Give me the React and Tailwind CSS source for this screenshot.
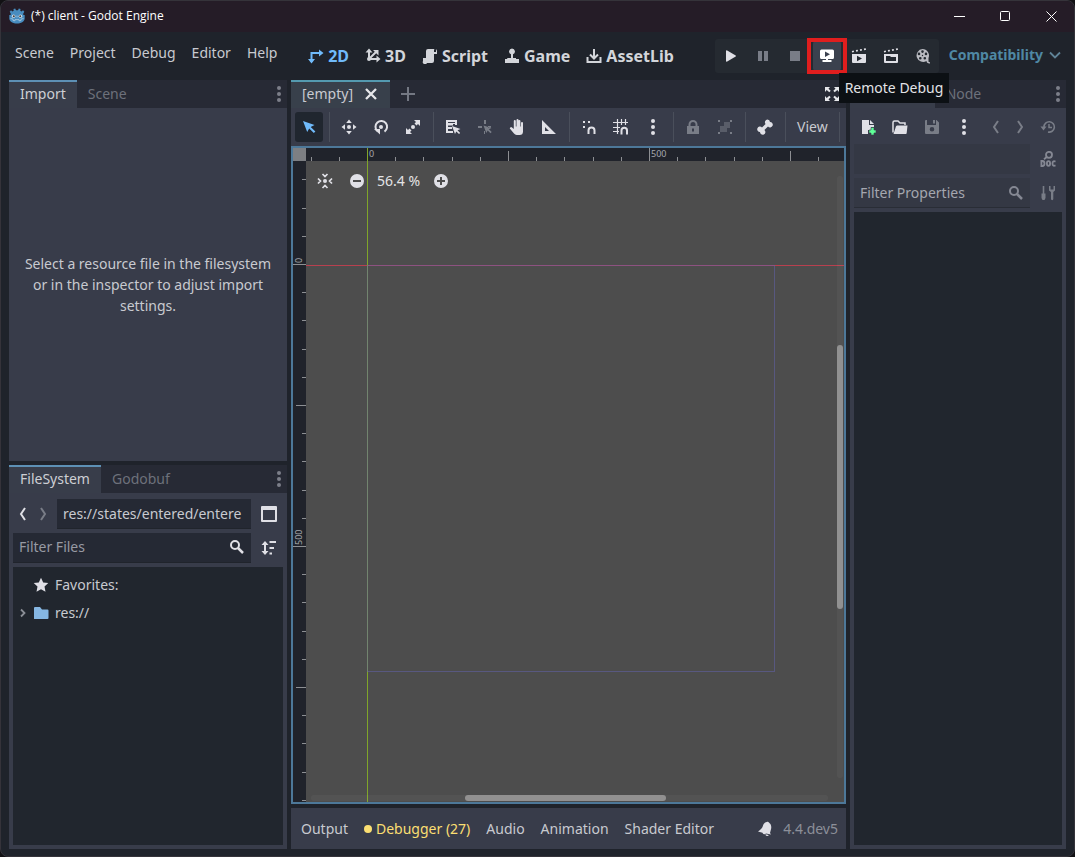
import React from 'react';

// --- Icons (16x16 grid) ---
const Icon = ({ children, size = 16, className = '' }) => (
    <svg width={size} height={size} viewBox="0 0 16 16" fill="currentColor" className={`shrink-0 ${className}`} aria-hidden="true">
        {children}
    </svg>
);

const line = { fill: 'none', stroke: 'currentColor', strokeWidth: 2 };
const clapper = 'M.8 2.900l1.900-.4.4 1.600-1.900.4zM4.800 2.100l1.900-.4.4 1.600-1.900.4zM8.800 1.300l1.900-.4.4 1.600-1.900.4zM12.800.6l1.900-.4.4 1.600-1.900.4z';

const icons = {
    mode2d: <><path d="M3.500 14V5h9" {...line} /><path d="M11 1.500 15.500 5 11 8.500zM0 11h7l-3.500 4.500z" /></>,
    mode3d: <><path d="M4 3v8h8M4 11l7-7" {...line} /><path d="M.5 4.500 4 .5l3.500 4zM11.500 7.500l4 3.500-4 3.500zM8 2h5.500v5.500z" /><circle cx="4" cy="11" r="2" /></>,
    script: <path d="M6 1a2 2 0 0 0-2 2v7H1v3a2 2 0 0 0 4 2h5a2 2 0 0 0 2-2V6h3V3a2 2 0 0 0-2-2zm6 1a1 1 0 0 1 2 0v2h-2z" />,
    game: <path d="M8 .5a3 3 0 0 0-1 5.800V10H4a1 1 0 0 0-1 1H1v4h14v-4h-3v-1H9V6.300A3 3 0 0 0 8 .5z" />,
    assetLib: <path d="M8 1v8M1.500 9v5h13V9M4 6.500l4 4 4-4" {...line} />,
    play: <path d="M3 3v10a.8.8 0 0 0 1.200.600l8.500-5a.8.8 0 0 0 0-1.200l-8.500-5A.8.8 0 0 0 3 3z" />,
    pause: <path d="M3 3h4v10H3zM9 3h4v10H9z" />,
    stop: <path d="M3 3h10v10H3z" />,
    remote: <path fillRule="evenodd" d="M2.500 1.500h11A1.500 1.500 0 0 1 15 3v6.500a1.500 1.500 0 0 1-1.500 1.500H9v1h3.500v2h-9v-2H7v-1H2.500A1.500 1.500 0 0 1 1 9.500V3a1.500 1.500 0 0 1 1.500-1.500zM6 3.500v5.500l5-2.750z" />,
    playScene: <path fillRule="evenodd" d={`M1 6h14v8a1 1 0 0 1-1 1H2a1 1 0 0 1-1-1zm5 1.700v5.500l5-2.750z${clapper}`} />,
    playCustom: <path fillRule="evenodd" d={`M1 6h14v8a1 1 0 0 1-1 1H2a1 1 0 0 1-1-1zm2 2v5h10V9H8L7 8z${clapper}`} />,
    movie: (
        <path
            fillRule="evenodd"
            d="M7.500 1a6.500 6.500 0 0 1 6 9V13a1 1 0 0 0 1.500 1v1.500c-2 .3-3.500-.8-3.500-2.500A6.500 6.500 0 1 1 7.500 1zm0 1.300a1.300 1.300 0 1 0 0 2.600 1.300 1.300 0 0 0 0-2.600zM4 4.600a1.300 1.300 0 1 0 0 2.600 1.300 1.300 0 0 0 0-2.600zm7 0a1.300 1.300 0 1 0 0 2.600 1.300 1.300 0 0 0 0-2.600zM5.300 9a1.300 1.300 0 1 0 0 2.600A1.300 1.300 0 0 0 5.300 9zm4.500 0a1.300 1.300 0 1 0 0 2.600 1.300 1.300 0 0 0 0-2.600zM7.500 6.800a.7.7 0 1 0 0 1.400.7.7 0 0 0 0-1.400z"
        />
    ),
    select: <path d="M2 2l4.200 11 2-3.600 4.600 4.600 1.600-1.600-4.700-4.500 3.800-1.800z" />,
    move: <path d="M8 .5 5.200 4h5.600zM8 15.500 5.200 12h5.600zM.5 8 4 5.200v5.600zM15.500 8 12 5.200v5.600zM8 6a2 2 0 1 0 0 4 2 2 0 0 0 0-4z" />,
    rotate: <><path d="M4.300 12A5.800 5.800 0 1 1 11.500 12.600" {...line} /><path d="M1 10h6v5.500z" /><circle cx="8" cy="8" r="2" /></>,
    scale: <><path d="M9 1h6v6l-2-2-1.500 1.500-2-2L11 3zM7 15H1V9l2 2 1.500-1.500 2 2L5 13z" /><circle cx="8" cy="8" r="2" /></>,
    listSelect: <><path d="M1 1h11v5h-2V3H3v2h5v1.500H3V8h4v2H3v2h5v2H1z" /><path d="M3 4.500h7M3 8.500h4" stroke="currentColor" /><path d="M7 7l3 8 1.300-2.600 2.700 2.700 1.200-1.200-2.700-2.700L15.500 10z" /></>,
    pivot: <path d="M7 1h2v4H7zM1 7h4v2H1zM7 12h1v3H7zM11 7h3v1.500h-3zM6.500 6.500l2.800 7.500 1.400-2.600 2.800 2.800 1.200-1.200-2.800-2.800 2.600-1.300z" />,
    hand: <path d="M8.500 0a1 1 0 0 0-1 1v6.500h-.7V2a1 1 0 0 0-2 0v8L3 8.500a1.200 1.200 0 0 0-1.800 1.600L5 14.500A3.500 3.500 0 0 0 8 16h2.500a3.500 3.500 0 0 0 3.500-3.500V4a1 1 0 0 0-2 0v3.500h-.6V2a1 1 0 0 0-2 0v5.500H9.500V1a1 1 0 0 0-1-1z" />,
    ruler: <path fillRule="evenodd" d="M1 1v14h14zm3 7 4 4H4z" />,
    smartSnap: <><path d="M2 2h2v2H2zM7 2h2v2H7zM2 7h2v2H2z" /><path d="M7.500 15v-3.500a3 3 0 0 1 6 0V15" {...line} /></>,
    gridSnap: <><path d="M4.500 0v15M0 3.500h15M0 8.500h7M8.500 0v6M12.500 0v6M0 12.500h6" fill="none" stroke="currentColor" strokeWidth="1.200" /><path d="M8.500 15.500v-4a2.700 2.700 0 0 1 5.500 0v4" {...line} /></>,
    dots: <><circle cx="8" cy="2" r="2" /><circle cx="8" cy="8" r="2" /><circle cx="8" cy="14" r="2" /></>,
    lock: <path fillRule="evenodd" d="M8 1a4.500 4.500 0 0 0-4.500 4.500V7H2v8h12V7h-1.500V5.500A4.500 4.500 0 0 0 8 1zm0 2a2.500 2.500 0 0 1 2.500 2.500V7h-5V5.500A2.500 2.500 0 0 1 8 3zM7 9.500h2v3H7z" />,
    group: <><path d="M1 1h2v2H1zM13 1h2v2h-2zM1 13h2v2H1zM13 13h2v2h-2z" /><path d="M7 3h6v6h-3v4H3V7h4z" opacity=".5" /></>,
    bone: <path d="M10.500.5A2.700 2.700 0 0 0 8.600 5L5 8.600a2.700 2.700 0 1 0-2 4.400 2.700 2.700 0 1 0 4.400-2L11 7.400a2.700 2.700 0 1 0 2-4.400A2.700 2.700 0 0 0 10.500.5z" />,
    file: <><path d="M2 1v14h6v-4h3V8h3V6H9V1zM10 1v4h4z" /><path d="M11 8.500h3V11h2v3h-2v2h-3v-2H9v-3h2z" fill="#5fff97" stroke="#373c49" strokeWidth=".6" /></>,
    folderOpen: <><path d="M1 13.500V3.500A1.500 1.500 0 0 1 2.500 2H6l2 2h5v2" fill="none" stroke="currentColor" strokeWidth="1.500" /><path d="M5 6.500h10.500l-.8 7.500a1 1 0 0 1-1 1H1.500L4 7.300z" /></>,
    save: <path fillRule="evenodd" d="M1 2a1 1 0 0 1 1-1h1v5h9V1h.5L15 3.500V14a1 1 0 0 1-1 1H2a1 1 0 0 1-1-1zm8-1h2v3.500H9zM8 8a2.300 2.300 0 1 0 0 4.600A2.300 2.300 0 0 0 8 8z" />,
    back: <path d="M10 2 6 8l4 6" {...line} />,
    forward: <path d="M6 2l4 6-4 6" {...line} />,
    history: <><path d="M4 8a5.200 5.200 0 1 1 4 5" {...line} strokeWidth="1.600" /><path d="M.5 7.500h6l-3 4z" /><path d="M9 5v3.500h3" fill="none" stroke="currentColor" strokeWidth="1.500" /></>,
    search: <><circle cx="6" cy="6" r="4" {...line} /><path d="M9 9l5 5" {...line} strokeWidth="2.500" /></>,
    tools: <><path d="M3.500 1v8" {...line} strokeWidth="1.600" /><path d="M1.500 8.500h4V13l-1 2h-2l-1-2zM9 1v4.500l2 1.500v7a1 1 0 0 0 2.300 0V7L15 5.500V1h-1.500v3.500h-3V1z" /></>,
    close: <path d="M3 3l10 10M13 3 3 13" {...line} strokeWidth="2.300" />,
    add: <path d="M8 1v14M1 8h14" {...line} />,
    expand: <path d="M1 1h5L4.500 2.700l2.200 2.100-1.400 1.500-2.600-2.200L1 6zM15 1h-5l1.500 1.700-2.200 2.100 1.400 1.500 2.600-2.200L15 6zM1 15h5l-1.500-1.700 2.200-2.100-1.400-1.500-2.600 2.200L1 10zM15 15h-5l1.500-1.700-2.200-2.100 1.400-1.500 2.600 2.200L15 10z" />,
    center: <><path d="M8 6a2 2 0 1 0 0 4 2 2 0 0 0 0-4z" /><path d="M5.500 1 8 3.500 10.500 1M5.500 15 8 12.500l2.500 2.500M1 5.500 3.500 8 1 10.500M15 5.500 12.500 8l2.500 2.500" fill="none" stroke="currentColor" strokeWidth="1.700" /></>,
    minus: <path fillRule="evenodd" d="M8 1a7 7 0 1 0 0 14A7 7 0 0 0 8 1zM4 7h8v2H4z" />,
    plus: <path fillRule="evenodd" d="M8 1a7 7 0 1 0 0 14A7 7 0 0 0 8 1zM7 4h2v3h3v2H9v3H7V9H4V7h3z" />,
    panel: <path fillRule="evenodd" d="M1 0h14a1 1 0 0 1 1 1v14a1 1 0 0 1-1 1H1a1 1 0 0 1-1-1V1a1 1 0 0 1 1-1zm1 4v10h12V4z" />,
    sort: <><path d="M4 3v10" {...line} /><path d="M.5 5 4 1l3.500 4zM.5 11 4 15l3.500-4zM8.500 1H15v2H8.500zM8.500 7H13v2H8.500zM8.500 12.500H11v2H8.500z" /></>,
    star: <path d="M8 .8l2.200 4.700 5.100.6-3.800 3.500 1 5.100L8 12.200l-4.500 2.500 1-5.100L.7 6.100l5.100-.6z" />,
    folder: <path d="M1 3a1 1 0 0 1 1-1h5l2 2.500h5.500a1 1 0 0 1 1 1V13a1 1 0 0 1-1 1H1.500a.5.5 0 0 1-.5-.5z" />,
    chevron: <path d="M6 4.500 9.500 8 6 11.500" {...line} strokeWidth="1.800" />,
    chevronDown: <path d="M3 5.500l5 5 5-5" {...line} strokeWidth="1.800" />,
    bell: <path d="M9 1.300C10 0 12 .8 12.300 2c2 1.500 2.300 3.800 1.700 6.300L13 12l1 1.600-5-1a2 2 0 0 1-3.500-.8L1 10.500l2-1.500c2-1.500 2.500-3 3.200-5C6.800 2.500 7.800 1.600 9 1.300zM8.500 13.200l3.300.7a1.700 1.700 0 0 1-3.300-.7z" />,
};

const IconButton = ({ icon, label, active, dim, className = 'w-7' }) => (
    <button
        type="button"
        aria-label={label}
        className={`flex h-[30px] shrink-0 items-center justify-center rounded-[3px] ${active ? 'bg-[#20262f] text-[#70bafa]' : dim ? 'text-[#797d87]' : 'text-[#e0e0e6]'} ${className}`}
    >
        <Icon>{icons[icon]}</Icon>
    </button>
);

const Separator = () => (
    <div className="flex h-[30px] w-1 shrink-0 justify-center"><div className="w-px bg-[#4a4f5b]" /></div>
);

const TabBar = ({ tabs, covered, children }) => (
    <div className="flex h-7 shrink-0 items-center bg-[#272a35]">
        {tabs.map((tab, i) => (
            <button
                key={tab}
                type="button"
                aria-label={tab}
                className={`h-full border-t-2 px-[11px] pb-0.5 ${i === 0 ? 'border-[#5d90b5] bg-[#383d4a] text-[#cdcfd4]' : 'border-transparent text-[#6d717b]'}`}
            >
                <span className={tab === covered ? 'invisible' : ''}>{tab}</span>
            </button>
        ))}
        {children}
    </div>
);

const DockMenu = () => (
    <button type="button" aria-label="Dock options" className="ml-auto flex h-full w-4 items-center justify-center text-[#7c7f89]">
        <Icon>{icons.dots}</Icon>
    </button>
);

const TitleBar = () => (
    <header className="flex h-8 shrink-0 items-center bg-[#251c27] pl-2 font-['Open_Sans',sans-serif] text-xs text-white">
        <svg width="16" height="16" viewBox="0 0 16 16" className="mr-1.5" aria-hidden="true">
            <path fill="#478cbf" d="M6.200.5 4.500 1l.2 1.700-1.200.7L2 2.300.7 3.800l1 1.600V7H.3v3.500c0 3 4 5 7.700 5s7.700-2 7.700-5V7h-1.400V5.400l1-1.600L14 2.300l-1.500 1.100-1.200-.7.200-1.700L9.800.5 9 2.200H7z" />
            <circle cx="4.600" cy="8.200" r="1.800" fill="#cfdde8" />
            <circle cx="11.400" cy="8.200" r="1.800" fill="#cfdde8" />
            <circle cx="4.800" cy="8.300" r="1" fill="#414042" />
            <circle cx="11.200" cy="8.300" r="1" fill="#414042" />
            <path fill="none" stroke="#b9d2e4" strokeWidth=".7" d="M1.500 10.500l2.500.5v1.500l2 .3v-1.200h4v1.200l2-.3V11l2.500-.5M8 7.500v2" />
        </svg>
        <span>(*) client - Godot Engine</span>
        <div className="ml-auto flex h-full">
            <button type="button" aria-label="Minimize" className="flex w-[46px] items-center justify-center">
                <svg width="11" height="11"><path d="M0 5.500h11" stroke="#fff" /></svg>
            </button>
            <button type="button" aria-label="Maximize" className="flex w-[46px] items-center justify-center">
                <svg width="11" height="11"><rect x=".5" y=".5" width="9" height="9" rx="1" fill="none" stroke="#fff" /></svg>
            </button>
            <button type="button" aria-label="Close" className="flex w-[46px] items-center justify-center">
                <svg width="11" height="11"><path d="M.5.5l10 10M10.500.5l-10 10" stroke="#fff" /></svg>
            </button>
        </div>
    </header>
);

const mainScreens = [
    ['2D', 'mode2d'],
    ['3D', 'mode3d'],
    ['Script', 'script'],
    ['Game', 'game'],
    ['AssetLib', 'assetLib'],
];

const TopBar = () => (
    <div className="flex h-12 shrink-0 items-center justify-between pl-[14px] pr-[11px]">
        <nav className="mb-1.5 flex gap-4">
            {['Scene', 'Project', 'Debug', 'Editor', 'Help'].map((item) => (
                <button key={item} type="button">{item}</button>
            ))}
        </nav>
        <div className="mr-2.5 flex gap-4 text-base font-bold">
            {mainScreens.map(([name, icon], i) => (
                <button key={name} type="button" className={`flex items-center gap-1 ${i === 0 ? 'text-[#70bafa]' : 'text-[#d3d5da]'}`}>
                    <Icon>{icons[icon]}</Icon>{name}
                </button>
            ))}
        </div>
        <div className="flex items-center gap-2.5">
            <div className="flex h-[34px] items-center gap-1 rounded-[3px] bg-[#252a31] px-0.5">
                <IconButton icon="play" label="Run Project" />
                <IconButton icon="pause" label="Pause" dim />
                <IconButton icon="stop" label="Stop" dim />
                <div className="relative">
                    <IconButton icon="remote" label="Remote Debug" className="w-7 bg-[#3b414e] text-white" />
                    <div className="pointer-events-none absolute -inset-x-1.5 -inset-y-[3px] border-4 border-[#e01e1e]" />
                    <div role="tooltip" className="absolute left-[26px] top-8 z-10 flex h-[30px] items-center whitespace-nowrap bg-[#0c1014] px-1.5 text-[#e2e3e6]">
                        Remote Debug
                    </div>
                </div>
                <IconButton icon="playScene" label="Run Current Scene" />
                <IconButton icon="playCustom" label="Run Specific Scene" />
                <IconButton icon="movie" label="Movie Maker" className="w-7 opacity-80" />
            </div>
            <button type="button" className="mb-0.5 flex items-center gap-1 font-bold text-[#4f88a4]">
                Compatibility
                <Icon className="text-[#5f8296]">{icons.chevronDown}</Icon>
            </button>
        </div>
    </div>
);

const ImportDock = () => (
    <section className="flex min-h-0 flex-1 flex-col">
        <TabBar tabs={['Import', 'Scene']}><DockMenu /></TabBar>
        <div className="flex flex-1 items-center bg-[#383c4a] px-2">
            <p className="w-full text-center leading-[21px]">Select a resource file in the filesystem or in the inspector to adjust import settings.</p>
        </div>
    </section>
);

const FileSystemDock = () => (
    <section className="flex h-1/2 flex-col">
        <TabBar tabs={['FileSystem', 'Godobuf']}><DockMenu /></TabBar>
        <div className="flex flex-1 flex-col gap-1 bg-[#383c4a] px-1 pb-1 pt-1.5">
            <div className="flex">
                <IconButton icon="back" label="Back" className="w-5" />
                <IconButton icon="forward" label="Forward" dim className="w-5" />
                <input aria-label="Current path" defaultValue="res://states/entered/entere" className="ml-1 h-[30px] min-w-0 flex-1 border-b border-[#20242c] bg-[#252934] px-1.5 outline-none" />
                <IconButton icon="panel" label="Split mode" className="ml-1 w-7" />
            </div>
            <div className="flex">
                <label className="flex h-[30px] min-w-0 flex-1 items-center border-b border-[#20242c] bg-[#252934] px-1.5 text-[#e0e0e6]">
                    <input aria-label="Filter Files" placeholder="Filter Files" className="min-w-0 flex-1 bg-transparent outline-none placeholder:text-[#979aa3]" />
                    <Icon>{icons.search}</Icon>
                </label>
                <IconButton icon="sort" label="Sort files" className="ml-1 w-7" />
            </div>
            <ul className="flex-1 bg-[#21262e] py-1">
                <li className="flex h-7 items-center gap-1.5 pl-5">
                    <Icon className="text-[#e0e0e6]">{icons.star}</Icon>Favorites:
                </li>
                <li className="flex h-7 items-center pl-0.5">
                    <Icon className="mr-0.5 text-[#8b8e96]">{icons.chevron}</Icon>
                    <Icon className="mr-1.5 text-[#86b7e3]">{icons.folder}</Icon>res://
                </li>
            </ul>
        </div>
    </section>
);

const toolbar = [
    ['select'],
    ['move', 'rotate', 'scale'],
    ['listSelect', 'pivot', 'hand', 'ruler'],
    ['smartSnap', 'gridSnap', 'dots'],
    ['lock', 'group'],
    ['bone'],
];
const dimTools = ['pivot', 'lock', 'group'];

const CanvasToolbar = () => (
    <div className="flex h-[38px] shrink-0 items-center gap-1 overflow-hidden bg-[#383c4a] px-1">
        {toolbar.map((tools) => (
            <React.Fragment key={tools[0]}>
                {tools.map((tool) => (
                    <IconButton key={tool} icon={tool} label={tool} active={tool === 'select'} dim={dimTools.includes(tool)} />
                ))}
                <Separator />
            </React.Fragment>
        ))}
        <button type="button" className="h-[30px] px-1.5">View</button>
        <Separator />
    </div>
);

// Ruler marks every 50 units; labels every 500, longer marks every 250
const ZOOM = 0.564;
const ORIGIN = { x: 74, y: 116 };
const marks = Array.from({ length: 24 }, (_, i) => (i - 3) * 50);
const markSize = (unit) => (unit % 500 === 0 ? 13 : unit % 250 === 0 ? 10 : 4);

const Viewport = () => (
    <div className="relative min-h-0 flex-1 overflow-hidden border-2 border-[#4d7899] bg-[#4d4d4d]">
        <svg className="absolute inset-0 h-full w-full" shapeRendering="crispEdges" aria-hidden="true">
            <rect width="100%" height="13" fill="#20232b" />
            <rect width="13" height="100%" fill="#20232b" />
            {marks.map((unit) => {
                const x = Math.round(ORIGIN.x + unit * ZOOM);
                const y = Math.round(ORIGIN.y + unit * ZOOM);
                const size = markSize(unit);
                const labelled = unit === 0 || unit === 500;
                return (
                    <g key={unit} fill="#8d8f93">
                        {x > 13 && unit < 1000 && <rect x={x} y={13 - size} width="1" height={size} />}
                        {y > 13 && <rect x={13 - size} y={y} width={size} height="1" />}
                        {labelled && <text x={x + 2} y="9" fontSize="9" fill="#a5a7ab">{unit}</text>}
                        {labelled && <text transform={`translate(9 ${y - 1}) rotate(-90)`} fontSize="9" fill="#a5a7ab">{unit}</text>}
                    </g>
                );
            })}
            <rect width="13" height="13" fill="#7d7f83" />
            <rect x="13" y={ORIGIN.y + 1} width="100%" height="1" fill="#b8404f" />
            <rect x={ORIGIN.x} y="0" width="1" height="100%" fill="#80a52a" />
            <rect x={ORIGIN.x + 0.5} y={ORIGIN.y + 1.5} width="407" height="406" fill="none" stroke="#6464b4" strokeOpacity=".5" />
        </svg>
        <div className="absolute left-[18px] top-[18px] flex h-[30px] items-center text-[#e4e4e6]">
            <IconButton icon="center" label="Center view" className="w-7" />
            <IconButton icon="minus" label="Zoom out" className="ml-1 w-7" />
            <span className="ml-1.5 w-[43px] whitespace-nowrap">56.4 %</span>
            <IconButton icon="plus" label="Zoom in" className="ml-[7px] w-7" />
        </div>
        <div className="absolute bottom-6 right-px top-7 w-1.5 rounded bg-white/4">
            <div className="mt-[169px] h-[264px] rounded-sm bg-[#919191]" />
        </div>
        <div className="absolute bottom-px left-[18px] right-4 h-1.5 rounded bg-white/4">
            <div className="ml-[154px] h-full w-[201px] rounded-sm bg-[#919090]" />
        </div>
    </div>
);

const BottomPanel = () => (
    <footer className="mt-1 flex h-[41px] shrink-0 items-center gap-4 whitespace-nowrap bg-[#383c4a] pl-2.5 pr-2">
        <button type="button">Output</button>
        <button type="button" className="flex items-center gap-1 text-[#fbdf72]">
            <span className="size-2 rounded-full bg-[#fbdf72]" />Debugger (27)
        </button>
        <button type="button">Audio</button>
        <button type="button">Animation</button>
        <button type="button">Shader Editor</button>
        <div className="ml-auto flex items-center gap-2.5 text-[#8c8f99]">
            <Icon className="text-[#e0e0e6]">{icons.bell}</Icon>4.4.dev5
        </div>
    </footer>
);

const InspectorDock = () => (
    <section className="flex w-[216px] shrink-0 flex-col">
        <TabBar tabs={['Inspector', 'Node']} covered="Inspector"><DockMenu /></TabBar>
        <div className="flex flex-1 flex-col gap-1 bg-[#383c4a] p-1">
            <div className="-mb-0.5 flex gap-1">
                <IconButton icon="file" label="New resource" />
                <IconButton icon="folderOpen" label="Load resource" />
                <IconButton icon="save" label="Save resource" dim />
                <IconButton icon="dots" label="Resource options" />
                <IconButton icon="back" label="Previous object" dim className="ml-auto w-5" />
                <IconButton icon="forward" label="Next object" dim className="w-5" />
                <IconButton icon="history" label="History" dim />
            </div>
            <div className="flex gap-1">
                <button type="button" aria-label="Edited object" className="h-[30px] flex-1 bg-[#343844]" />
                <button type="button" aria-label="Open documentation" className="flex h-[30px] w-7 items-center justify-center text-[#858893]">
                    <svg width="16" height="16" viewBox="0 0 16 16" fill="none" stroke="currentColor" strokeWidth="1.800" aria-hidden="true">
                        <circle cx="9" cy="3.800" r="3" />
                        <path d="M6.800 6 4 8.300M1.400 10v5h1q2.100 0 2.100-2.500t-2.100-2.500zM15.500 10.600q-3-1.300-3 1.900t3 1.900" />
                        <ellipse cx="8.500" cy="12.500" rx="1.600" ry="2.300" />
                    </svg>
                </button>
            </div>
            <div className="flex gap-1">
                <label className="flex h-[30px] min-w-0 flex-1 items-center border-b border-[#292d36] bg-[#343844] px-1.5 text-[#858893]">
                    <input aria-label="Filter Properties" placeholder="Filter Properties" className="min-w-0 flex-1 bg-transparent outline-none placeholder:text-[#a4a7af]" />
                    <Icon>{icons.search}</Icon>
                </label>
                <IconButton icon="tools" label="Property tools" dim />
            </div>
            <div className="flex-1 bg-[#21262e]" />
        </div>
    </section>
);

const App = () => (
    <div className="h-screen bg-[#121114] font-['Noto_Sans',sans-serif] text-sm text-[#c8cad0]">
        <div className="flex h-full flex-col overflow-hidden rounded-lg border border-[#35333a] bg-[#1f232b]">
            <div className="-mt-px flex min-h-0 flex-1 flex-col">
                <TitleBar />
                <TopBar />
                <main className="flex min-h-0 flex-1 gap-1 px-2 pb-[7px]">
                    <aside className="flex w-[278px] shrink-0 flex-col gap-1">
                        <ImportDock />
                        <FileSystemDock />
                    </aside>
                    <div className="flex min-w-0 flex-1 flex-col">
                        <div className="flex h-7 shrink-0 items-center bg-[#272a35]">
                            <div className="flex h-full items-center gap-2.5 border-t-2 border-[#549ab0] bg-[#38404b] px-[11px] pb-0.5">
                                <button type="button">[empty]</button>
                                <button type="button" aria-label="Close scene" className="text-[#e6e7ea]"><Icon>{icons.close}</Icon></button>
                            </div>
                            <button type="button" aria-label="New scene" className="ml-2.5 text-[#747883]"><Icon>{icons.add}</Icon></button>
                            <button type="button" aria-label="Distraction free mode" className="ml-auto mr-1.5 text-[#e6e7ea]"><Icon>{icons.expand}</Icon></button>
                        </div>
                        <CanvasToolbar />
                        <Viewport />
                        <BottomPanel />
                    </div>
                    <InspectorDock />
                </main>
            </div>
        </div>
    </div>
);

export default App;
